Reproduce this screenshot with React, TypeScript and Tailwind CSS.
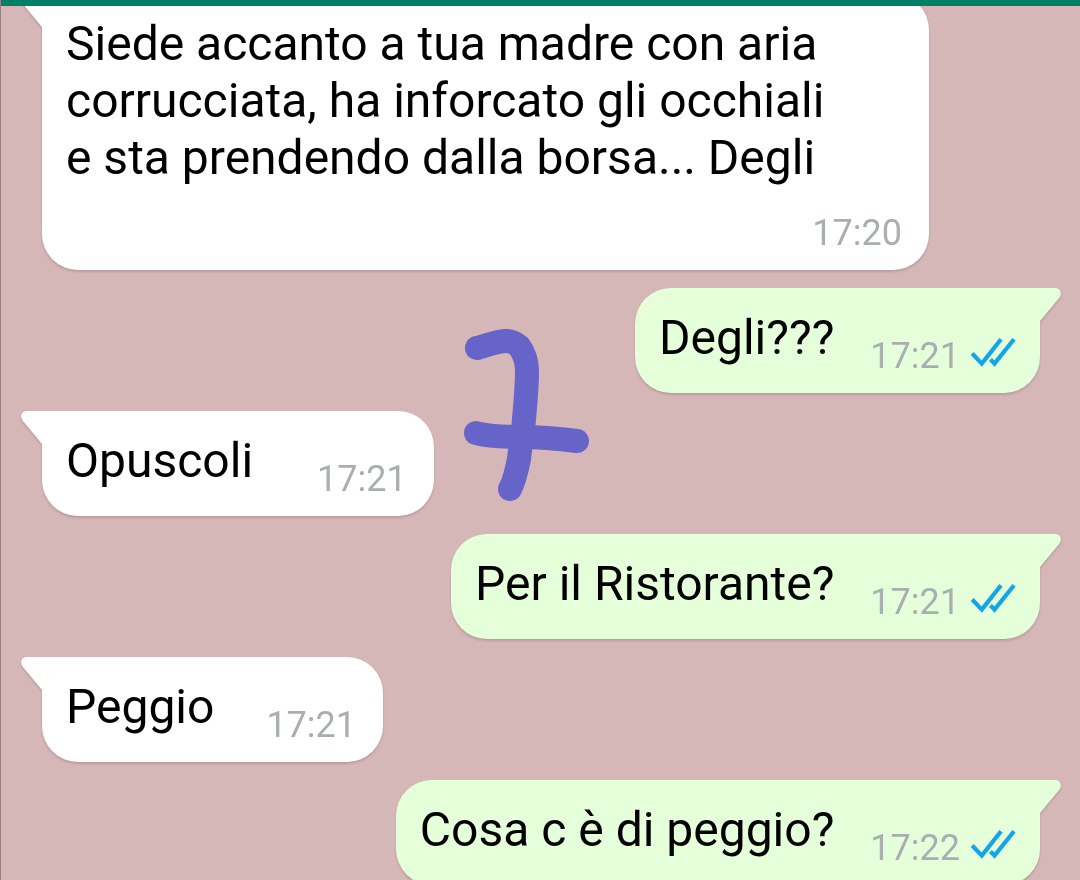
const MESSAGES = [
  { text: "Siede accanto a tua madre con aria corrucciata, ha inforcato gli occhiali e sta prendendo dalla borsa... Degli", time: "17:20", mine: false, long: true, gap: "gap-[26px]" },
  { text: "Degli???", time: "17:21", mine: true, long: false, gap: "gap-9" },
  { text: "Opuscoli", time: "17:21", mine: false, long: false, gap: "gap-16" },
  { text: "Per il Ristorante?", time: "17:21", mine: true, long: false, gap: "gap-9" },
  { text: "Peggio", time: "17:21", mine: false, long: false, gap: "gap-13" },
  { text: "Cosa c è di peggio?", time: "17:22", mine: true, long: false, gap: "gap-9" },
]

type Message = (typeof MESSAGES)[number]

function Tail({ mine }: { mine: boolean }) {
  return mine ? (
    <svg viewBox="0 0 22 34" className="absolute top-0 -right-[21px] w-[22px] h-[34px]" aria-hidden="true">
      <path d="M0 0H16C21 0 23.5 5 20.5 9.5L1 33V34H0Z" fill="#e5ffdb" />
    </svg>
  ) : (
    <svg viewBox="0 0 22 34" className="absolute top-0 -left-[21px] w-[22px] h-[34px]" aria-hidden="true">
      <path d="M22 0H6C1 0 -1.5 5 1.5 9.5L21 33V34H22Z" fill="#ffffff" />
    </svg>
  )
}

function ReadTicks() {
  return (
    <svg viewBox="0 0 46 42" className="w-[46px] h-[42px]" fill="none" stroke="#12a5ea" strokeWidth="4.2" role="img" aria-label="Letto">
      <path d="M2.2 18.5L11.8 28.6L31 4.2" />
      <path d="M20.5 24.6L24.5 28.6L44 4.2" />
    </svg>
  )
}

function Bubble({ msg }: { msg: Message }) {
  return (
    <li className={`flex ${msg.mine ? "justify-end" : "justify-start"}`}>
      <div className={`relative flex ${msg.gap} pt-[21px] pb-4 pl-6 drop-shadow-[0_2px_1px_rgba(90,50,50,0.2)]
        ${msg.long ? "flex-col w-full max-w-[887px]" : "items-end"}
        ${msg.mine ? "pr-6 bg-[#e5ffdb] rounded-[36px] rounded-tr-none" : "pr-[27px] bg-white rounded-[36px] rounded-tl-none"}`}>
        <Tail mine={msg.mine} />
        <p className={`text-[48px] leading-[57px] text-black ${msg.long ? "max-w-[780px]" : "mb-[11px]"}`}>{msg.text}</p>
        <div className="flex gap-[10px] self-end text-[36px] leading-[42px] text-[#a9afb1]">
          <time>{msg.time}</time>
          {msg.mine && <ReadTicks />}
        </div>
      </div>
    </li>
  )
}

// hand-drawn seven on top of the chat
function Scribble() {
  return (
    <svg viewBox="0 0 126 172" className="absolute top-[329px] left-[462px] w-[126px] h-[172px]" fill="none" stroke="#6663c9"
      strokeWidth="24" strokeLinecap="round" strokeLinejoin="round" role="img" aria-label="7">
      <path d="M14 19C22 17 34 12 43 12C48 12 52 14 56 17C61 24 64 32 64 42C64 60 61 90 60 101C59 108 57 120 56 130C54 140 51 153 47 160" />
      <path d="M13 104C24 107 40 108 58 108C78 108 98 110 114 112" />
    </svg>
  )
}

export default function App() {
  return (
    <div className="relative h-screen overflow-hidden border-l border-[#957f80] bg-[#d5b7b8] font-['Roboto',sans-serif]">
      <header className="relative z-10 h-1.5 bg-[#008069]" />
      <main>
        <ul className="flex flex-col gap-[18px] -mt-3 pl-[41px] pr-10">
          {MESSAGES.map((m, i) => <Bubble key={i} msg={m} />)}
        </ul>
      </main>
      <Scribble />
    </div>
  )
}
